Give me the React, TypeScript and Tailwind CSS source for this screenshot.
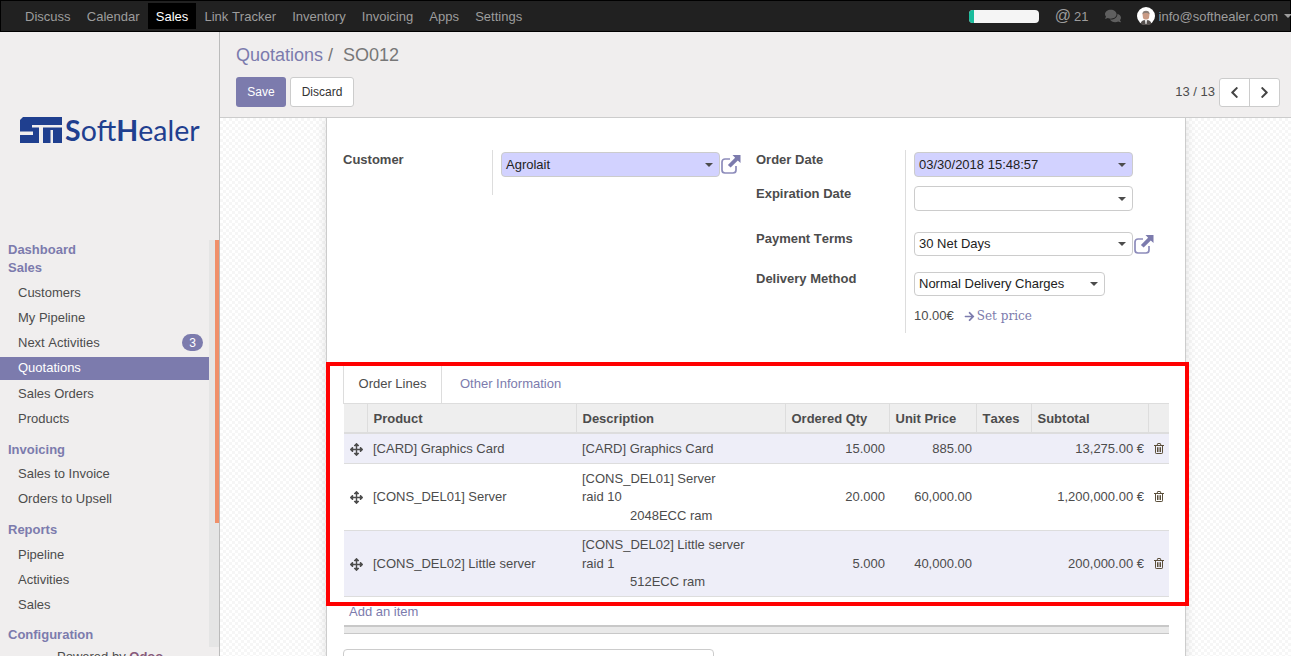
import React from 'react';
import { FaArrowRight, FaArrowsAlt, FaChevronLeft, FaChevronRight, FaComments } from 'react-icons/fa';

const topMenu = ['Discuss', 'Calendar', 'Sales', 'Link Tracker', 'Inventory', 'Invoicing', 'Apps', 'Settings'];

const lines = [
  { product: '[CARD] Graphics Card', desc: ['[CARD] Graphics Card'], sub: '', qty: '15.000', price: '885.00', total: '13,275.00 €', h: 'h-[30px]', alt: true },
  { product: '[CONS_DEL01] Server', desc: ['[CONS_DEL01] Server', 'raid 10'], sub: '2048ECC ram', qty: '20.000', price: '60,000.00', total: '1,200,000.00 €', h: 'h-[67px]', alt: false },
  { product: '[CONS_DEL02] Little server', desc: ['[CONS_DEL02] Little server', 'raid 1'], sub: '512ECC ram', qty: '5.000', price: '40,000.00', total: '200,000.00 €', h: 'h-[66px]', alt: true },
];

const Head: React.FC<{ children: React.ReactNode }> = ({ children }) => (
  <div className="text-[13px] leading-[18px] font-bold text-[#7c7bad] pl-2">{children}</div>
);

const Item: React.FC<{ label: string; active?: boolean; badge?: string }> = ({ label, active, badge }) => (
  <div className="py-[1.1px]">
    <div className={`flex items-center justify-between h-[23px] pl-[18px] pr-[6px] text-[13px] ${active ? 'bg-[#7c7bad] text-white' : 'text-[#4c4c4c]'}`}>
      {label}
      {badge && <span className="flex items-center justify-center w-[21px] h-[17px] rounded-full bg-[#7c7bad] text-white text-[12px]">{badge}</span>}
    </div>
  </div>
);

const Select: React.FC<{ value?: string; width: string; height?: string; required?: boolean }> = ({ value, width, height = 'h-[25px]', required }) => (
  <div className={`flex items-center justify-between rounded-[4px] border border-[#ccc] pl-[4px] pr-[6px] text-[13px] text-[#222] ${height} ${width} ${required ? 'bg-[#d2d2ff]' : 'bg-white'}`}>
    <span>{value}</span>
    <span className="w-0 h-0 border-x-[4px] border-t-[4px] border-x-transparent border-t-[#4c4c4c]" />
  </div>
);

const OpenLink = () => (
  <svg width="20" height="19" viewBox="0 0 20 19" className="ml-[1px] mt-[3px] text-[#7c7bad]">
    <path d="M9 4 H4 A3 3 0 0 0 1 7 V15 A3 3 0 0 0 4 18 H12 A3 3 0 0 0 15 15 V11" fill="none" stroke="#8d8cbb" strokeWidth="1.7" />
    <path d="M11.5 0 H19.5 V8 L16.8 5.4 L9.6 12.6 L6.9 9.9 L14.1 2.7 Z" fill="currentColor" />
  </svg>
);

const Trash = () => (
  <svg width="10" height="11" viewBox="0 0 10 11" fill="none" stroke="#5a4e3a" strokeWidth="1">
    <path d="M0 2.5 H10 M3 2.5 L3.7 0.5 H6.3 L7 2.5 M1.5 2.5 V9.8 A0.7 0.7 0 0 0 2.2 10.5 H7.8 A0.7 0.7 0 0 0 8.5 9.8 V2.5 M3.5 4.2 V9 M5 4.2 V9 M6.5 4.2 V9" />
  </svg>
);

const Label: React.FC<{ children: React.ReactNode; className?: string }> = ({ children, className }) => (
  <div className={`w-[149px] shrink-0 text-[13px] leading-[18px] font-bold text-[#4c4c4c] ${className ?? 'pt-[1px]'}`}>{children}</div>
);

export default function App() {
  return (
    <div className="flex flex-col h-screen overflow-hidden bg-[#f0eeee] text-[#4c4c4c] [font-kerning:none] [font-family:'Liberation_Sans',sans-serif]">
      {/* Top bar */}
      <header className="flex items-center justify-between h-[32px] shrink-0 bg-[#212121] border border-black text-[13px] text-[#9d9d9d]">
        <nav className="flex items-center ml-[16px]">
          {topMenu.map(m => (
            <span key={m} className={`flex items-center h-[26px] px-[8.1px] pt-[2px] ${m === 'Sales' ? 'bg-black text-white' : ''}`}>{m}</span>
          ))}
        </nav>
        <div className="flex items-center mr-[-2px]">
          <div className="w-[70px] h-[13px] rounded-[4px] bg-[#f5f5f5] overflow-hidden">
            <div className="w-[5px] h-full bg-[#1abc9c]" />
          </div>
          <span className="ml-[16px] text-[16px] leading-none">@</span>
          <span className="ml-[3px] pt-[2px]">21</span>
          <FaComments size={16} className="ml-[16px] text-[#5f5f5f]" />
          <svg width="18" height="18" viewBox="0 0 18 18" className="ml-[16px]">
            <circle cx="9" cy="9" r="9" fill="#fff" />
            <path d="M5.5 7 C5.5 3 12.5 3 12.5 7 L12 11 C11 13 7 13 6 11 Z" fill="#c99a84" />
            <path d="M5.5 7 C5 2.5 13 2.5 12.5 7 C11 5.5 7 5.5 5.5 7 Z" fill="#8a7f78" />
            <path d="M3.5 17 C4 13.5 6.5 13 9 13 C11.5 13 14 13.5 14.5 17 C12 18.5 6 18.5 3.5 17 Z" fill="#55504e" />
            <path d="M8 13 L10 13 L9.5 17 L8.5 17 Z" fill="#eee" />
          </svg>
          <span className="ml-[4px] pt-[2px]">info@softhealer.com</span>
          <span className="ml-[6px] w-0 h-0 border-x-[4px] border-t-[4px] border-x-transparent border-t-[#9d9d9d]" />
        </div>
      </header>

      <div className="flex flex-1 min-h-0">
        {/* Sidebar */}
        <aside className="w-[220px] shrink-0 border-r border-[#bbb] flex flex-col">
          <div className="h-[208px] shrink-0 pt-[85px] pl-[20px] flex items-start">
            <svg width="42" height="26" viewBox="0 0 42 26" className="shrink-0">
              <path d="M3 0 H42 V26 H0 V3 Z" fill="#1f3f8f" />
              <path d="M19 8 H42 V10.5 H19 Z M0 14.5 H13 V18 H0 Z M12 8 H23 V10.5 H12 Z M19 8 H23 V26 H19 Z M30.5 13 H33 V26 H30.5 Z" fill="#f0eeee" />
            </svg>
            <span className="ml-[3px] text-[28.5px] leading-[26px] text-[#1f3f8f] [font-family:Lato,sans-serif] whitespace-nowrap">
              <b>S</b>oft<b>H</b>ealer
            </span>
          </div>
          <div className="flex h-[407px] shrink-0">
            <nav className="w-[209px] shrink-0 pt-[1px]">
              <Head>Dashboard</Head>
              <Head>Sales</Head>
              <div className="h-[3px]" />
              <Item label="Customers" />
              <Item label="My Pipeline" />
              <Item label="Next Activities" badge="3" />
              <Item label="Quotations" active />
              <Item label="Sales Orders" />
              <Item label="Products" />
              <div className="h-[9.6px]" />
              <Head>Invoicing</Head>
              <div className="h-[2.4px]" />
              <Item label="Sales to Invoice" />
              <Item label="Orders to Upsell" />
              <div className="h-[9.6px]" />
              <Head>Reports</Head>
              <div className="h-[2.8px]" />
              <Item label="Pipeline" />
              <Item label="Activities" />
              <Item label="Sales" />
              <div className="h-[8.4px]" />
              <Head>Configuration</Head>
            </nav>
            <div className="w-[10px] bg-[#e5e5e5] flex justify-end items-start">
              <div className="w-[4px] h-[283px] bg-[#f0906a]" />
            </div>
          </div>
          <div className="pl-[57px] text-[13px] whitespace-nowrap">Powered by <b className="text-[#875a7b]">Odoo</b></div>
        </aside>

        <main className="flex-1 min-w-0 flex flex-col">
          {/* Control panel */}
          <div className="h-[86px] shrink-0 border-b border-[#ccc] px-[16px] pt-[11px] flex flex-col">
            <div className="text-[18px] leading-[25px]">
              <span className="text-[#7c7bad]">Quotations</span>
              <span className="text-[#777]"> /</span>
              <span className="ml-[10px] text-[#777]">SO012</span>
            </div>
            <div className="flex items-center justify-between mt-[9px] mr-[-5px]">
              <div className="flex gap-[4px] text-[12px]">
                <button className="w-[50px] h-[30px] rounded-[3px] bg-[#7c7bad] text-white">Save</button>
                <button className="w-[64px] h-[30px] rounded-[3px] bg-white border border-[#ccc] text-[#333]">Discard</button>
              </div>
              <div className="flex items-center text-[13px]">
                <span className="mr-[4px]">13 / 13</span>
                <div className="flex w-[61px] h-[29px] bg-white border border-[#ccc] rounded-[3px] text-[#444]">
                  <span className="flex-1 flex items-center justify-center border-r border-[#ccc]"><FaChevronLeft size={13} /></span>
                  <span className="flex-1 flex items-center justify-center"><FaChevronRight size={13} /></span>
                </div>
              </div>
            </div>
          </div>

          {/* Sheet background */}
          <div className="flex-1 min-h-0 overflow-hidden pl-[106px] bg-[repeating-conic-gradient(#f6f6f6_0_25%,#fff_0_50%)] bg-[length:6px_6px]">
            <div className="w-[860px] h-[600px] bg-white border-x border-[#ccc] shadow-[0_0_10px_rgba(0,0,0,0.12)] px-[16px] pt-[32px]">
              <div className="flex">
                <div className="w-[413px] shrink-0 flex items-start">
                  <Label>Customer</Label>
                  <div className="h-[45px] border-l border-[#ddd] pl-2 pt-[2px] flex items-start">
                    <Select value="Agrolait" width="w-[219px]" required />
                    <OpenLink />
                  </div>
                </div>
                <div className="flex-1 min-w-0">
                  <div className="flex">
                    <Label>Order Date</Label>
                    <div className="h-[34px] border-l border-[#ddd] pl-2 pt-[2px]">
                      <Select value="03/30/2018 15:48:57" width="w-[219px]" required />
                    </div>
                  </div>
                  <div className="flex">
                    <Label>Expiration Date</Label>
                    <div className="h-[41px] border-l border-[#ddd] pl-2 pt-[2px]">
                      <Select width="w-[219px]" />
                    </div>
                  </div>
                  <div className="flex">
                    <Label className="pt-[5px]">Payment Terms</Label>
                    <div className="h-[40px] border-l border-[#ddd] pl-2 pt-[7px] flex items-start">
                      <Select value="30 Net Days" width="w-[219px]" height="h-[24px]" />
                      <OpenLink />
                    </div>
                  </div>
                  <div className="flex">
                    <Label className="pt-[5px]">Delivery Method</Label>
                    <div className="h-[68px] border-l border-[#ddd] pl-2 pt-[7px]">
                      <Select value="Normal Delivery Charges" width="w-[191px]" height="h-[24px]" />
                      <div className="flex items-center mt-[11px] text-[13px] leading-[18px]">
                        <span>10.00€</span>
                        <FaArrowRight size={11} className="ml-[10px] text-[#7c7bad]" />
                        <span className="ml-[2px] text-[#7c7bad] text-[12px] [font-family:'DejaVu_Serif',serif]">Set price</span>
                      </div>
                    </div>
                  </div>
                </div>
              </div>

              {/* Notebook, outlined in red in the picture */}
              <div className="relative mt-[33px]">
                <div className="absolute left-[-17px] right-[-20px] top-[-4px] bottom-[-9px] border-[4px] border-[#ff0000] pointer-events-none" />
                <div className="flex h-[38px] border-b border-[#ddd] text-[13px]">
                  <div className="w-[99px] h-[37px] pb-[1px] flex items-center justify-center border-x border-[#ddd] bg-white">Order Lines</div>
                  <div className="ml-[2px] px-[16px] pb-[2px] flex items-center text-[#7c7bad]">Other Information</div>
                </div>
                <table className="ml-[1px] w-[825px] table-fixed border-collapse text-[13px] leading-[18.57px]">
                  <colgroup>
                    <col className="w-[23px]" />
                    <col className="w-[209px]" />
                    <col className="w-[209px]" />
                    <col className="w-[104px]" />
                    <col className="w-[87px]" />
                    <col className="w-[55px]" />
                    <col className="w-[117px]" />
                    <col className="w-[21px]" />
                  </colgroup>
                  <thead>
                    <tr className="h-[29px] bg-[#eeeeee] border-b-2 border-[#ddd] font-bold">
                      <th />
                      <th className="border-l border-[#ddd] pl-[6px] pr-[4px] pt-[3px] text-left">Product</th>
                      <th className="border-l border-[#ddd] pl-[6px] pr-[4px] pt-[3px] text-left">Description</th>
                      <th className="border-l border-[#ddd] pl-[6px] pr-[4px] pt-[3px] text-left">Ordered Qty</th>
                      <th className="border-l border-[#ddd] pl-[6px] pr-[4px] pt-[3px] text-left">Unit Price</th>
                      <th className="border-l border-[#ddd] pl-[6px] pr-[4px] pt-[3px] text-left">Taxes</th>
                      <th className="border-l border-[#ddd] pl-[6px] pr-[4px] pt-[3px] text-left">Subtotal</th>
                      <th className="border-l border-[#ddd]" />
                    </tr>
                  </thead>
                  <tbody>
                    {lines.map(l => (
                      <tr key={l.product} className={`${l.h} border-b border-[#ddd] ${l.alt ? 'bg-[#eeeef8]' : 'bg-white'}`}>
                        <td className="pl-[6px] pt-[2px]"><FaArrowsAlt size={13} /></td>
                        <td className="pl-[6px] pr-[4px] pt-[2px]">{l.product}</td>
                        <td className="pl-[6px] pr-[4px] pt-[2px]">
                          {l.desc.map(d => <div key={d}>{d}</div>)}
                          {l.sub && <div className="pl-[48px]">{l.sub}</div>}
                        </td>
                        <td className="pl-[6px] pr-[4px] pt-[2px] text-right">{l.qty}</td>
                        <td className="pl-[6px] pr-[4px] pt-[2px] text-right">{l.price}</td>
                        <td />
                        <td className="pl-[6px] pr-[4px] pt-[2px] text-right">{l.total}</td>
                        <td className="pl-[6px]"><Trash /></td>
                      </tr>
                    ))}
                  </tbody>
                </table>
              </div>

              <div className="ml-[6px] mt-[6px] text-[13px] leading-[18px] text-[#7c7bad]">Add an item</div>
              <div className="ml-[1px] mt-[4px] h-[9px] bg-[#e9e9e9] border-t-2 border-b border-[#c8c8c8]" />
              <div className="mt-[15px] w-[371px] h-[30px] rounded-[4px] border border-[#ccc]" />
            </div>
          </div>
        </main>
      </div>
    </div>
  );
}
